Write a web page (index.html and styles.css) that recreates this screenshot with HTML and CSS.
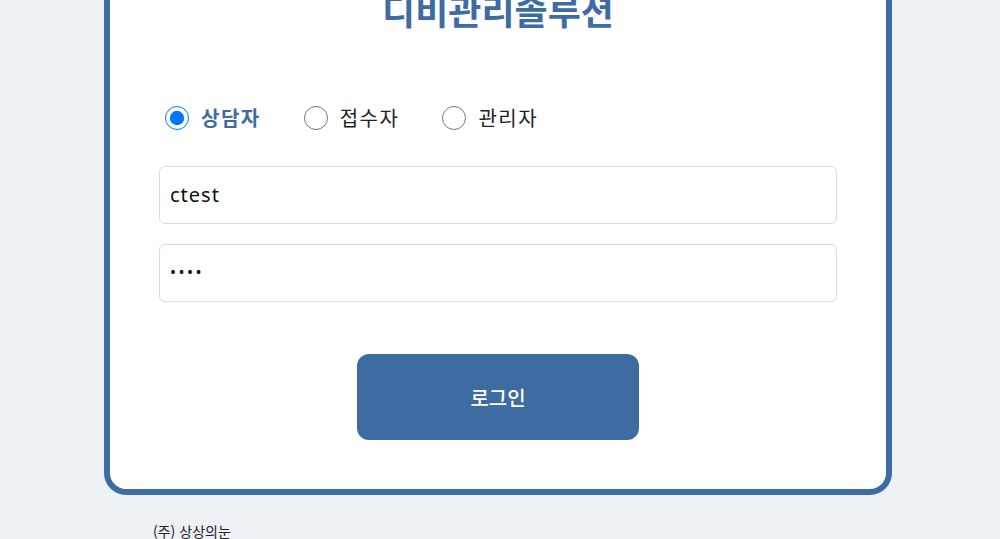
FILE: index.html
```html
<!DOCTYPE html>
<html lang="ko">
<head>
<meta charset="utf-8">
<title>디비관리솔루션</title>
<link rel="stylesheet" href="styles.css">
</head>
<body>
<div class="page">
  <div class="wrap">
    <form class="card">
      <h1 class="title">디비관리솔루션</h1>
      <div class="roles">
        <label class="role role-active"><input type="radio" name="role" checked><span>상담자</span></label>
        <label class="role"><input type="radio" name="role"><span>접수자</span></label>
        <label class="role"><input type="radio" name="role"><span>관리자</span></label>
      </div>
      <input class="field" type="text" value="ctest">
      <input class="field field-pw" type="password" value="1234">
      <div class="actions">
        <button type="button" class="btn">로그인</button>
      </div>
    </form>
    <p class="footer">(주) 상상의눈</p>
  </div>
</div>
</body>
</html>
```

FILE: styles.css
```css
html, body {
  margin: 0;
  padding: 0;
  background: #edf1f6;
  overflow: hidden;
}
body {
  font-family: "Noto Sans CJK KR", "Noto Sans", sans-serif;
  color: #111;
}
.page {
  display: flex;
  justify-content: center;
  padding-right: 4px;
}
.wrap {
  width: 788px;
  margin-top: -47px;
}
.card {
  box-sizing: border-box;
  background: #fff;
  border: 6px solid #3e6ca2;
  border-radius: 22px;
  padding: 30px 49px 49px;
  display: flex;
  flex-direction: column;
}
.title {
  margin: 0;
  font-size: 36px;
  line-height: 40px;
  font-weight: 700;
  color: #3e6ca2;
  text-align: center;
  letter-spacing: 0;
}
.roles {
  display: flex;
  align-items: center;
  margin-top: 77px;
  height: 24px;
  padding-left: 6px;
}
.role {
  display: flex;
  align-items: center;
  font-size: 20px;
  line-height: 24px;
  color: #222;
  margin-right: 43px;
  letter-spacing: 1.5px;
}
.role input {
  width: 24px;
  height: 24px;
  margin: 0 12px 0 0;
}
.role-active span {
  font-weight: 700;
  color: #3e6ca2;
}
.field {
  box-sizing: border-box;
  height: 58px;
  width: 100%;
  margin: 36px 0 0;
  border: 1px solid #dcdcdc;
  border-radius: 6px;
  padding: 0 10px 2px;
  font-family: "Noto Sans", sans-serif;
  font-size: 20px;
  letter-spacing: 1px;
  color: #111;
  background: #fff;
  outline: none;
}
.field-pw {
  margin-top: 20px;
  font-size: 16px;
  letter-spacing: 2.5px;
}
.actions {
  display: flex;
  justify-content: center;
  margin-top: 52px;
}
.btn {
  width: 282px;
  height: 86px;
  border: none;
  border-radius: 12px;
  background: #3e6ca2;
  color: #fff;
  font-family: "Noto Sans CJK KR", sans-serif;
  font-size: 20px;
  font-weight: 500;
  cursor: pointer;
}
.footer {
  margin: 26px 0 0 49px;
  font-size: 14px;
  line-height: 20px;
  color: #222;
}
```
